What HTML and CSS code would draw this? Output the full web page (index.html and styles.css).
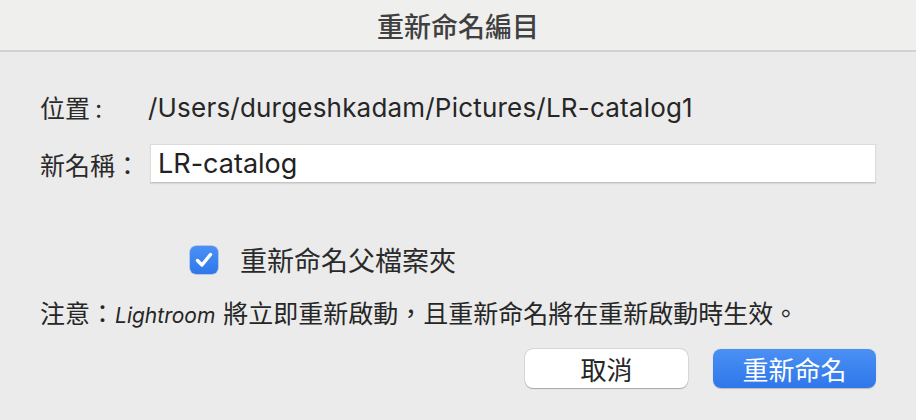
FILE: index.html
```html
<!DOCTYPE html>
<html lang="zh-Hant">
<head>
<meta charset="utf-8">
<title>重新命名編目</title>
<link rel="stylesheet" href="styles.css">
</head>
<body>
<div class="window">
  <div class="titlebar"><span class="title">重新命名編目</span></div>
  <div class="main">
    <div class="row row-location">
      <span class="label label-loc">位置<span class="colon">:</span></span>
      <span class="path">/Users/durgeshkadam/Pictures/LR-catalog1</span>
    </div>
    <div class="row row-name">
      <span class="label label-name">新名稱：</span>
      <div class="input">LR-catalog</div>
    </div>
    <div class="row row-check">
      <span class="checkbox">
        <svg viewBox="0 0 28 28" width="28" height="28"><path d="M7.5 14.5 L12 19 L20.5 8.5" fill="none" stroke="#fff" stroke-width="3.4" stroke-linecap="round" stroke-linejoin="round"/></svg>
      </span>
      <span class="check-label">重新命名父檔案夾</span>
    </div>
    <p class="note">注意：<i class="app">Lightroom</i><span class="sp"></span>將立即重新啟動，且重新命名將在重新啟動時生效。</p>
    <div class="row buttons">
      <button class="btn btn-cancel">取消</button>
      <button class="btn btn-primary">重新命名</button>
    </div>
  </div>
</div>
</body>
</html>
```
FILE: styles.css
```css
html, body {
  margin: 0;
  padding: 0;
  width: 916px;
  height: 420px;
  overflow: hidden;
  background: #ebebeb;
  font-family: "Inter", "Noto Sans CJK TC", sans-serif;
  color: #262626;
}

.window {
  width: 916px;
  height: 420px;
  background: #ebebeb;
}

.titlebar {
  height: 50px;
  background: #efefee;
  border-bottom: 2px solid #d2d2d2;
  display: flex;
  align-items: center;
  justify-content: center;
}

.title {
  font-family: "Noto Sans CJK TC", sans-serif;
  font-size: 27px;
  font-weight: 500;
  color: #404040;
}

.main {
  padding: 0 40px;
  display: flex;
  flex-direction: column;
}

.row {
  display: flex;
  align-items: center;
}

.label {
  font-family: "Noto Sans CJK TC", sans-serif;
  font-size: 25px;
  line-height: 28px;
  color: #2a2a2a;
}

.colon {
  font-family: "Inter", sans-serif;
  margin-left: 5px;
}

.row-location {
  margin-top: 42px;
  height: 28px;
}

.label-loc {
  width: 108px;
  flex: none;
}

.path {
  font-size: 26px;
  line-height: 28px;
  letter-spacing: 0.2px;
  color: #262626;
}

.row-name {
  margin-top: 22px;
}

.label-name {
  width: 110px;
  flex: none;
}

.input {
  flex: 1;
  height: 39px;
  box-sizing: border-box;
  background: #ffffff;
  border: 1px solid #dcdcdc;
  border-bottom-color: #c4c4c4;
  box-shadow: 0 1px 1px rgba(0,0,0,0.08);
  font-size: 27px;
  line-height: 37px;
  padding-left: 7px;
  color: #222;
}

.row-check {
  margin-top: 62px;
  height: 30px;
  padding-left: 150px;
}

.checkbox {
  width: 28px;
  height: 28px;
  border-radius: 6px;
  background: linear-gradient(#4a90f5, #2f78ea);
  box-shadow: 0 0 0 0.5px rgba(30,90,200,0.5);
  display: flex;
  flex: none;
}

.check-label {
  margin-left: 22px;
  font-family: "Noto Sans CJK TC", sans-serif;
  font-size: 27px;
  line-height: 30px;
  color: #2a2a2a;
}

.note {
  margin: 22px 0 0 0;
  height: 30px;
  font-family: "Noto Sans CJK TC", sans-serif;
  font-size: 25px;
  line-height: 30px;
  color: #262626;
  white-space: nowrap;
}

.app {
  font-family: "Inter", sans-serif;
  font-style: italic;
  font-size: 21px;
}

.sp {
  display: inline-block;
  width: 8px;
}

.buttons {
  margin-top: 22px;
  justify-content: flex-end;
  gap: 25px;
}

.btn {
  width: 163px;
  height: 39px;
  border-radius: 8px;
  font-family: "Noto Sans CJK TC", sans-serif;
  font-size: 26px;
  line-height: 37px;
  padding: 0;
  border: none;
  cursor: default;
}

.btn-cancel {
  background: #ffffff;
  color: #262626;
  box-shadow: 0 0.5px 1px rgba(0,0,0,0.25), 0 0 0 0.5px rgba(0,0,0,0.12);
}

.btn-primary {
  background: linear-gradient(#4b90f4, #2f77ea);
  color: #ffffff;
  box-shadow: 0 0.5px 1px rgba(0,0,0,0.2);
}
```
